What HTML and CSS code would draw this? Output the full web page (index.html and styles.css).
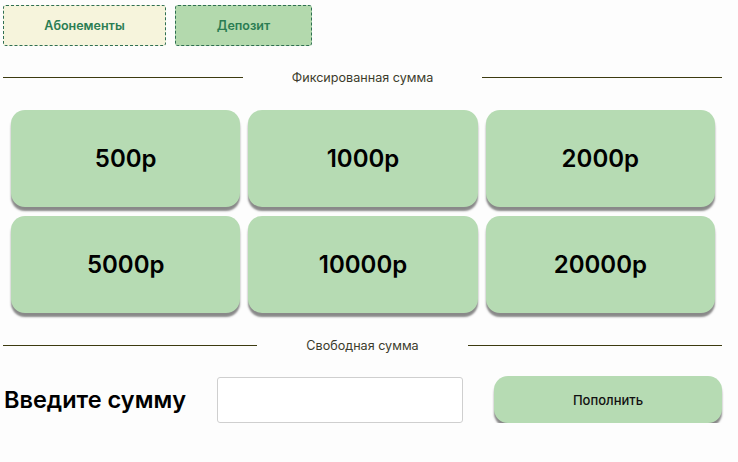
FILE: index.html
```html
<!DOCTYPE html>
<html lang="ru">
<head>
<meta charset="utf-8">
<link rel="stylesheet" href="styles.css">
</head>
<body>
<div class="page">
  <div class="tabs">
    <button class="tab tab-plain">Абонементы</button>
    <button class="tab tab-active">Депозит</button>
  </div>
  <div class="sep sep-fixed">
    <span class="line"></span>
    <span class="sep-text">Фиксированная сумма</span>
    <span class="line"></span>
  </div>
  <div class="grid">
    <button class="amount">500р</button>
    <button class="amount">1000р</button>
    <button class="amount">2000р</button>
    <button class="amount">5000р</button>
    <button class="amount">10000р</button>
    <button class="amount">20000р</button>
  </div>
  <div class="sep sep-free">
    <span class="line"></span>
    <span class="sep-text">Свободная сумма</span>
    <span class="line"></span>
  </div>
  <div class="free">
    <span class="free-label">Введите сумму</span>
    <input class="free-input" type="text">
    <button class="pay">Пополнить</button>
  </div>
</div>
</body>
</html>
```
FILE: styles.css
```css
html, body {
  margin: 0;
  padding: 0;
  background: #fdfdfd;
}
body {
  font-family: Inter, "Noto Sans", sans-serif;
  color: #000;
}
.page {
  width: 719px;
  padding: 5px 0 0 3px;
}
button {
  font-family: inherit;
  cursor: pointer;
}
.tabs {
  display: flex;
  gap: 9px;
}
.tab {
  height: 41px;
  border: 1px dashed #2f6f52;
  border-radius: 3px;
  font-size: 12.5px;
  font-weight: 600;
  color: #2b7d53;
  padding: 0;
}
.tab-plain {
  width: 163px;
  background: #f6f4dc;
}
.tab-active {
  width: 137px;
  background: #b3d9ad;
}
.sep {
  display: flex;
  align-items: center;
}
.sep-fixed {
  margin-top: 24px;
  height: 14px;
}
.sep-free {
  margin-top: 25px;
  height: 14px;
}
.line {
  flex: 1;
  height: 1px;
  background: #3d3b10;
}
.sep-text {
  font-size: 12.6px;
  color: #3c3c2c;
  margin: 0 49px;
}
.grid {
  display: grid;
  grid-template-columns: repeat(3, 1fr);
  gap: 9px 8px;
  margin: 26px 7px 0 8px;
}
.amount {
  height: 97px;
  border: none;
  border-radius: 14px;
  background: #b6dbb3;
  box-shadow: 0 4px 2px rgba(60, 60, 60, 0.6);
  font-size: 24px;
  font-weight: 600;
  color: #000;
}
.free {
  display: flex;
  align-items: center;
  margin-top: 24px;
}
.free-label {
  font-size: 23.5px;
  font-weight: 600;
  margin-left: 1px;
  width: 213px;
}
.free-input {
  width: 246px;
  height: 46px;
  box-sizing: border-box;
  border: 1px solid #cfcfcf;
  border-radius: 3px;
  background: #fff;
  padding: 0 8px;
  margin-top: 1px;
}
.pay {
  margin-left: 31px;
  width: 228px;
  height: 47px;
  border: none;
  border-radius: 14px;
  background: #b6dbb3;
  box-shadow: 0 4px 2px rgba(60, 60, 60, 0.6);
  font-size: 13px;
  font-weight: 500;
  color: #111;
}
```
